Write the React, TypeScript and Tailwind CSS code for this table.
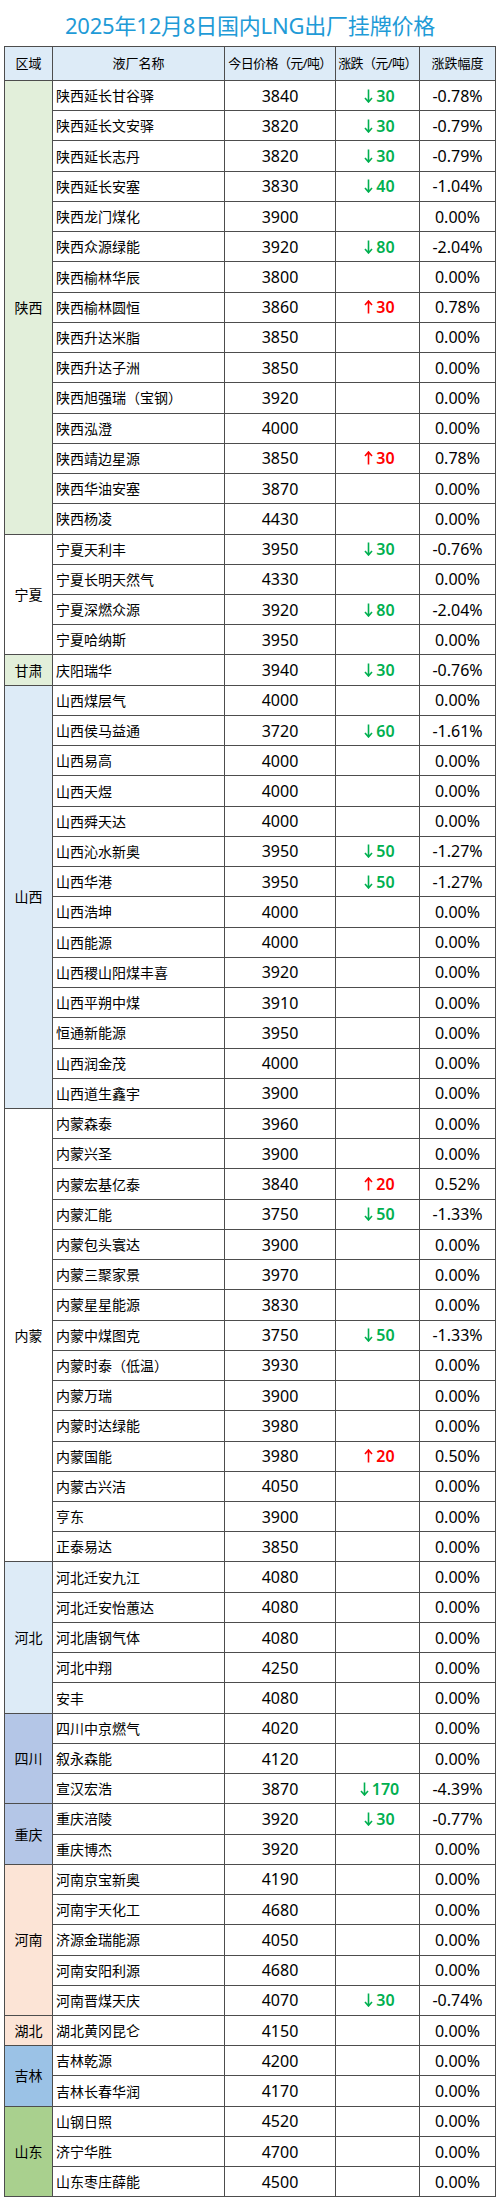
import React from "react";

type Row = { name: string; price: number; change?: number; pct: string };
type Region = { region: string; bg: string; rows: Row[] };

const regions: Region[] = [
  {
    region: "陕西",
    bg: "bg-[#e2efda]",
    rows: [
      { name: "陕西延长甘谷驿", price: 3840, change: -30, pct: "-0.78%" },
      { name: "陕西延长文安驿", price: 3820, change: -30, pct: "-0.79%" },
      { name: "陕西延长志丹", price: 3820, change: -30, pct: "-0.79%" },
      { name: "陕西延长安塞", price: 3830, change: -40, pct: "-1.04%" },
      { name: "陕西龙门煤化", price: 3900, pct: "0.00%" },
      { name: "陕西众源绿能", price: 3920, change: -80, pct: "-2.04%" },
      { name: "陕西榆林华辰", price: 3800, pct: "0.00%" },
      { name: "陕西榆林圆恒", price: 3860, change: 30, pct: "0.78%" },
      { name: "陕西升达米脂", price: 3850, pct: "0.00%" },
      { name: "陕西升达子洲", price: 3850, pct: "0.00%" },
      { name: "陕西旭强瑞（宝钢）", price: 3920, pct: "0.00%" },
      { name: "陕西泓澄", price: 4000, pct: "0.00%" },
      { name: "陕西靖边星源", price: 3850, change: 30, pct: "0.78%" },
      { name: "陕西华油安塞", price: 3870, pct: "0.00%" },
      { name: "陕西杨凌", price: 4430, pct: "0.00%" },
    ],
  },
  {
    region: "宁夏",
    bg: "bg-white",
    rows: [
      { name: "宁夏天利丰", price: 3950, change: -30, pct: "-0.76%" },
      { name: "宁夏长明天然气", price: 4330, pct: "0.00%" },
      { name: "宁夏深燃众源", price: 3920, change: -80, pct: "-2.04%" },
      { name: "宁夏哈纳斯", price: 3950, pct: "0.00%" },
    ],
  },
  {
    region: "甘肃",
    bg: "bg-[#e2efda]",
    rows: [{ name: "庆阳瑞华", price: 3940, change: -30, pct: "-0.76%" }],
  },
  {
    region: "山西",
    bg: "bg-[#ddebf7]",
    rows: [
      { name: "山西煤层气", price: 4000, pct: "0.00%" },
      { name: "山西侯马益通", price: 3720, change: -60, pct: "-1.61%" },
      { name: "山西易高", price: 4000, pct: "0.00%" },
      { name: "山西天煜", price: 4000, pct: "0.00%" },
      { name: "山西舜天达", price: 4000, pct: "0.00%" },
      { name: "山西沁水新奥", price: 3950, change: -50, pct: "-1.27%" },
      { name: "山西华港", price: 3950, change: -50, pct: "-1.27%" },
      { name: "山西浩坤", price: 4000, pct: "0.00%" },
      { name: "山西能源", price: 4000, pct: "0.00%" },
      { name: "山西稷山阳煤丰喜", price: 3920, pct: "0.00%" },
      { name: "山西平朔中煤", price: 3910, pct: "0.00%" },
      { name: "恒通新能源", price: 3950, pct: "0.00%" },
      { name: "山西润金茂", price: 4000, pct: "0.00%" },
      { name: "山西道生鑫宇", price: 3900, pct: "0.00%" },
    ],
  },
  {
    region: "内蒙",
    bg: "bg-white",
    rows: [
      { name: "内蒙森泰", price: 3960, pct: "0.00%" },
      { name: "内蒙兴圣", price: 3900, pct: "0.00%" },
      { name: "内蒙宏基亿泰", price: 3840, change: 20, pct: "0.52%" },
      { name: "内蒙汇能", price: 3750, change: -50, pct: "-1.33%" },
      { name: "内蒙包头寰达", price: 3900, pct: "0.00%" },
      { name: "内蒙三聚家景", price: 3970, pct: "0.00%" },
      { name: "内蒙星星能源", price: 3830, pct: "0.00%" },
      { name: "内蒙中煤图克", price: 3750, change: -50, pct: "-1.33%" },
      { name: "内蒙时泰（低温）", price: 3930, pct: "0.00%" },
      { name: "内蒙万瑞", price: 3900, pct: "0.00%" },
      { name: "内蒙时达绿能", price: 3980, pct: "0.00%" },
      { name: "内蒙国能", price: 3980, change: 20, pct: "0.50%" },
      { name: "内蒙古兴洁", price: 4050, pct: "0.00%" },
      { name: "亨东", price: 3900, pct: "0.00%" },
      { name: "正泰易达", price: 3850, pct: "0.00%" },
    ],
  },
  {
    region: "河北",
    bg: "bg-[#ddebf7]",
    rows: [
      { name: "河北迁安九江", price: 4080, pct: "0.00%" },
      { name: "河北迁安怡蕙达", price: 4080, pct: "0.00%" },
      { name: "河北唐钢气体", price: 4080, pct: "0.00%" },
      { name: "河北中翔", price: 4250, pct: "0.00%" },
      { name: "安丰", price: 4080, pct: "0.00%" },
    ],
  },
  {
    region: "四川",
    bg: "bg-[#b4c6e7]",
    rows: [
      { name: "四川中京燃气", price: 4020, pct: "0.00%" },
      { name: "叙永森能", price: 4120, pct: "0.00%" },
      { name: "宣汉宏浩", price: 3870, change: -170, pct: "-4.39%" },
    ],
  },
  {
    region: "重庆",
    bg: "bg-[#b4c6e7]",
    rows: [
      { name: "重庆涪陵", price: 3920, change: -30, pct: "-0.77%" },
      { name: "重庆博杰", price: 3920, pct: "0.00%" },
    ],
  },
  {
    region: "河南",
    bg: "bg-[#fce4d6]",
    rows: [
      { name: "河南京宝新奥", price: 4190, pct: "0.00%" },
      { name: "河南宇天化工", price: 4680, pct: "0.00%" },
      { name: "济源金瑞能源", price: 4050, pct: "0.00%" },
      { name: "河南安阳利源", price: 4680, pct: "0.00%" },
      { name: "河南晋煤天庆", price: 4070, change: -30, pct: "-0.74%" },
    ],
  },
  {
    region: "湖北",
    bg: "bg-[#fce4d6]",
    rows: [{ name: "湖北黄冈昆仑", price: 4150, pct: "0.00%" }],
  },
  {
    region: "吉林",
    bg: "bg-[#9bc2e6]",
    rows: [
      { name: "吉林乾源", price: 4200, pct: "0.00%" },
      { name: "吉林长春华润", price: 4170, pct: "0.00%" },
    ],
  },
  {
    region: "山东",
    bg: "bg-[#a9d08e]",
    rows: [
      { name: "山钢日照", price: 4520, pct: "0.00%" },
      { name: "济宁华胜", price: 4700, pct: "0.00%" },
      { name: "山东枣庄薛能", price: 4500, pct: "0.00%" },
    ],
  },
];

const Arrow = ({ up }: { up: boolean }) => (
  <svg width="9" height="14" viewBox="0 0 9 14" className="mr-[3px]">
    {up ? (
      <path d="M4.5 13.5V1.5M1 5l3.5-4L8 5" fill="none" stroke="currentColor" strokeWidth="1.6" />
    ) : (
      <path d="M4.5 0.5v12M1 9l3.5 4L8 9" fill="none" stroke="currentColor" strokeWidth="1.6" />
    )}
  </svg>
);

const Change = ({ value }: { value?: number }) => {
  if (value === undefined) return null;
  const up = value > 0;
  return (
    <span
      className={`flex items-center pl-[4px] text-[16px] font-semibold ${
        up ? "text-[#ff0000]" : "text-[#00b050]"
      }`}
    >
      <Arrow up={up} />
      {Math.abs(value)}
    </span>
  );
};

export default function App() {
  return (
    <div className="w-[500px] min-h-[2201px] bg-white text-black font-['Noto_Sans','Noto_Sans_CJK_SC',sans-serif]">
      <h1 className="h-[46px] flex items-center justify-center pt-[4px] text-[22px] text-[#1f9bd7] tracking-[-0.2px]">
        2025年12月8日国内LNG出厂挂牌价格
      </h1>

      <div className="mx-[4px] w-[492px] border-x border-t border-[#4d4d4d]">
        {/* header */}
        <div className="flex h-[34px] bg-[#ddebf7] border-b border-[#4d4d4d] text-[13px]">
          <div className="w-[48px] border-r border-[#4d4d4d] flex items-center justify-center">区域</div>
          <div className="w-[172px] border-r border-[#4d4d4d] flex items-center justify-center">液厂名称</div>
          <div className="w-[111px] border-r border-[#4d4d4d] flex items-center justify-center whitespace-nowrap tracking-[-0.6px]">
            今日价格（元/吨）
          </div>
          <div className="w-[84px] border-r border-[#4d4d4d] flex items-center justify-center whitespace-nowrap tracking-[-0.6px]">
            涨跌（元/吨）
          </div>
          <div className="flex-1 flex items-center justify-center">涨跌幅度</div>
        </div>

        {regions.map((g) => (
          <div key={g.region} className="flex">
            <div
              className={`w-[48px] shrink-0 border-r border-b border-[#4d4d4d] flex items-center justify-center text-[14px] ${g.bg}`}
            >
              {g.region}
            </div>
            <div className="flex-1 flex flex-col">
              {g.rows.map((r) => (
                <div key={r.name} className="flex h-[30.24px] border-b border-[#4d4d4d]">
                  <div className="w-[172px] border-r border-[#4d4d4d] flex items-center pl-[3px] text-[14px] whitespace-nowrap">
                    {r.name}
                  </div>
                  <div className="w-[111px] border-r border-[#4d4d4d] flex items-center justify-center text-[16px]">
                    {r.price}
                  </div>
                  <div className="w-[84px] border-r border-[#4d4d4d] flex items-center justify-center">
                    <Change value={r.change} />
                  </div>
                  <div className="flex-1 flex items-center justify-center text-[16px]">{r.pct}</div>
                </div>
              ))}
            </div>
          </div>
        ))}
      </div>
    </div>
  );
}
